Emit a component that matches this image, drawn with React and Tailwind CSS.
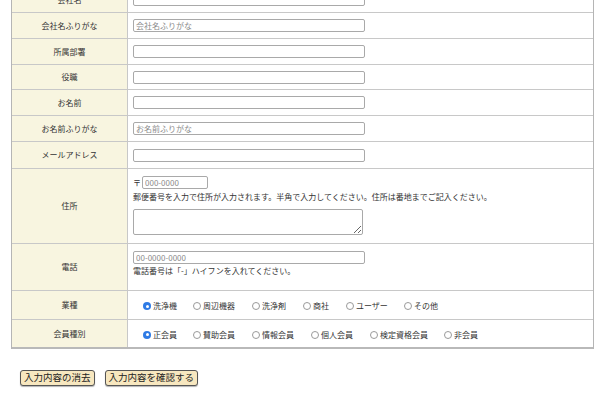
const FONT = { fontFamily: '"Noto Sans CJK JP", "Noto Sans", sans-serif' };

function TextInput({ placeholder = '', w = 'w-[232px]' }) {
  return (
    <input
      type="text"
      placeholder={placeholder}
      className={`${w} h-[13px] border border-[#a9a9a9] rounded-[2px] bg-white px-[2px] text-[8px] leading-none text-[#333] placeholder:text-[#8a8a8a] outline-none`}
      style={FONT}
    />
  );
}

function Radio({ label, checked = false }) {
  return (
    <label className="flex items-center gap-[2px] cursor-pointer">
      {checked ? (
        <span className="w-[8px] h-[8px] rounded-full bg-[#2f7be5] flex items-center justify-center">
          <span className="w-[3px] h-[3px] rounded-full bg-white" />
        </span>
      ) : (
        <span className="w-[8px] h-[8px] rounded-full border border-[#9a9a9a] bg-white" />
      )}
      <span className="text-[8px] text-[#333] leading-none">{label}</span>
    </label>
  );
}

function Row({ label, h = 'h-[26px]', children, last = false }) {
  return (
    <div className={`flex ${h} ${last ? 'border-b-2 border-[#b9b9b9]' : 'border-b border-[#c8c8c8]'}`}>
      <div className="w-[116px] shrink-0 bg-[#f8f5e0] border-r border-[#c8c8c8] flex items-center justify-center text-[8px] text-[#333]">
        {label}
      </div>
      <div className="flex-1 pl-[5px] flex items-center">{children}</div>
    </div>
  );
}

export default function App() {
  const industries = ['洗浄機', '周辺機器', '洗浄剤', '商社', 'ユーザー', 'その他'];
  const industryX = ['w-[50px]', 'w-[59px]', 'w-[51px]', 'w-[43px]', 'w-[58px]', 'w-[50px]'];
  const members = ['正会員', '賛助会員', '情報会員', '個人会員', '検定資格会員', '非会員'];
  const memberX = ['w-[50px]', 'w-[59px]', 'w-[59px]', 'w-[59px]', 'w-[74px]', 'w-[50px]'];

  return (
    <div className="w-[600px] h-[400px] overflow-hidden bg-white" style={FONT}>
      <div className="mt-[-13px] ml-[11px] w-[583px] border-l border-r border-[#b5b5b5]">
        <Row label="会社名"><TextInput /></Row>
        <Row label="会社名ふりがな"><TextInput placeholder="会社名ふりがな" /></Row>
        <Row label="所属部署"><TextInput /></Row>
        <Row label="役職" h="h-[25px]"><TextInput /></Row>
        <Row label="お名前"><TextInput /></Row>
        <Row label="お名前ふりがな"><TextInput placeholder="お名前ふりがな" /></Row>
        <Row label="メールアドレス" h="h-[27px]"><TextInput /></Row>

        <Row label="住所" h="h-[75px]">
          <div className="flex flex-col self-start pt-[7px]">
            <div className="flex items-center gap-[1px] text-[8px] text-[#333]">
              <span className="leading-none">〒</span>
              <TextInput placeholder="000-0000" w="w-[66px]" />
            </div>
            <p className="text-[8px] text-[#333] leading-none mt-[4px]">
              郵便番号を入力で住所が入力されます。半角で入力してください。住所は番地までご記入ください。
            </p>
            <textarea
              className="mt-[8px] w-[230px] h-[26px] border border-[#a9a9a9] rounded-[2px] bg-white outline-none"
            />
          </div>
        </Row>

        <Row label="電話" h="h-[47px]">
          <div className="flex flex-col self-start pt-[7px]">
            <TextInput placeholder="00-0000-0000" />
            <p className="text-[8px] text-[#333] leading-none mt-[3px]">
              電話番号は「-」ハイフンを入れてください。
            </p>
          </div>
        </Row>

        <Row label="業種" h="h-[29px]">
          <div className="flex items-center pl-[10px] pt-[2px]">
            {industries.map((item, i) => (
              <div key={item} className={industryX[i]}>
                <Radio label={item} checked={i === 0} />
              </div>
            ))}
          </div>
        </Row>

        <Row label="会員種別" h="h-[29px]" last>
          <div className="flex items-center pl-[10px] pt-[2px]">
            {members.map((item, i) => (
              <div key={item} className={memberX[i]}>
                <Radio label={item} checked={i === 0} />
              </div>
            ))}
          </div>
        </Row>
      </div>

      {/* BUTTONS */}
      <div className="flex gap-[10px] ml-[20px] mt-[21px]">
        <button className="h-[16px] px-[3px] bg-[#f7e7bf] border border-[#555] rounded-[3px] text-[9.5px] leading-none text-[#222] shadow-[0_1px_1px_rgba(0,0,0,0.3)]">
          入力内容の消去
        </button>
        <button className="h-[16px] px-[3px] bg-[#f7e7bf] border border-[#555] rounded-[3px] text-[9.5px] leading-none text-[#222] shadow-[0_1px_1px_rgba(0,0,0,0.3)]">
          入力内容を確認する
        </button>
      </div>
    </div>
  );
}
